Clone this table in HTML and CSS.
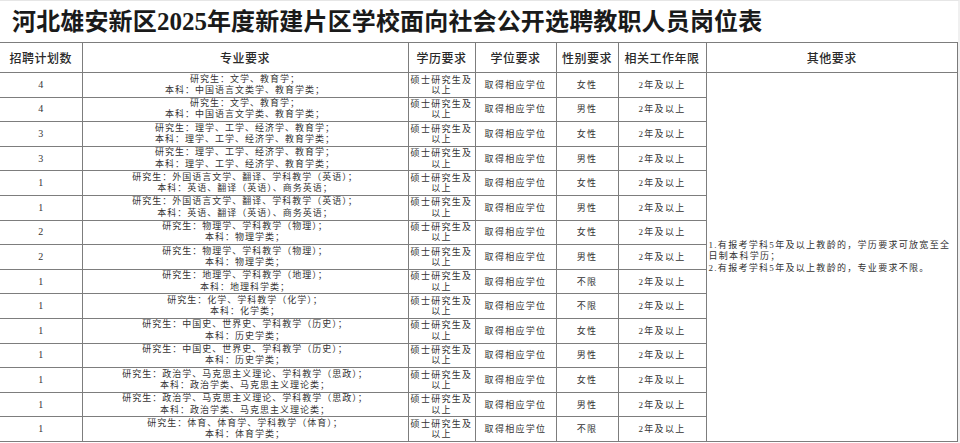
FILE: index.html
```html
<!DOCTYPE html>
<html lang="zh-CN">
<head>
<meta charset="utf-8">
<title>岗位表</title>
<link rel="stylesheet" href="styles.css">
</head>
<body>
<div class="page">
  <h1 class="title">河北雄安新区<span class="num">2025</span>年度新建片区学校面向社会公开选聘教职人员岗位表</h1>
  <table class="t">
    <colgroup>
      <col class="c1"><col class="c2"><col class="c3"><col class="c4"><col class="c5"><col class="c6"><col class="c7">
    </colgroup>
    <thead>
      <tr>
        <th>招聘计划数</th><th>专业要求</th><th>学历要求</th><th>学位要求</th><th>性别要求</th><th>相关工作年限</th><th>其他要求</th>
      </tr>
    </thead>
    <tbody>
      <tr>
        <td class="n">4</td>
        <td class="major">研究生：文学、教育学；<br>本科：中国语言文类学、教育学类；</td>
        <td class="edu">硕士研究生及以上</td><td class="s">取得相应学位</td><td class="s">女性</td><td class="s">2年及以上</td>
        <td class="other" rowspan="15"><span class="ol">1.有报考学科5年及以上教龄的，学历要求可放宽至全</span><br><span class="ol">日制本科学历；</span><br><span class="ol">2.有报考学科5年及以上教龄的，专业要求不限。</span></td>
      </tr>
      <tr>
        <td class="n">4</td>
        <td class="major">研究生：文学、教育学；<br>本科：中国语言文学类、教育学类；</td>
        <td class="edu">硕士研究生及以上</td><td class="s">取得相应学位</td><td class="s">男性</td><td class="s">2年及以上</td>
      </tr>
      <tr>
        <td class="n">3</td>
        <td class="major">研究生：理学、工学、经济学、教育学；<br>本科：理学、工学、经济学、教育学类；</td>
        <td class="edu">硕士研究生及以上</td><td class="s">取得相应学位</td><td class="s">女性</td><td class="s">2年及以上</td>
      </tr>
      <tr>
        <td class="n">3</td>
        <td class="major">研究生：理学、工学、经济学、教育学；<br>本科：理学、工学、经济学、教育学类；</td>
        <td class="edu">硕士研究生及以上</td><td class="s">取得相应学位</td><td class="s">男性</td><td class="s">2年及以上</td>
      </tr>
      <tr>
        <td class="n">1</td>
        <td class="major">研究生：外国语言文学、翻译、学科教学（英语）；<br>本科：英语、翻译（英语）、商务英语；</td>
        <td class="edu">硕士研究生及以上</td><td class="s">取得相应学位</td><td class="s">女性</td><td class="s">2年及以上</td>
      </tr>
      <tr>
        <td class="n">1</td>
        <td class="major">研究生：外国语言文学、翻译、学科教学（英语）；<br>本科：英语、翻译（英语）、商务英语；</td>
        <td class="edu">硕士研究生及以上</td><td class="s">取得相应学位</td><td class="s">男性</td><td class="s">2年及以上</td>
      </tr>
      <tr>
        <td class="n">2</td>
        <td class="major">研究生：物理学、学科教学（物理）；<br>本科：物理学类；</td>
        <td class="edu">硕士研究生及以上</td><td class="s">取得相应学位</td><td class="s">女性</td><td class="s">2年及以上</td>
      </tr>
      <tr>
        <td class="n">2</td>
        <td class="major">研究生：物理学、学科教学（物理）；<br>本科：物理学类；</td>
        <td class="edu">硕士研究生及以上</td><td class="s">取得相应学位</td><td class="s">男性</td><td class="s">2年及以上</td>
      </tr>
      <tr>
        <td class="n">1</td>
        <td class="major">研究生：地理学、学科教学（地理）；<br>本科：地理科学类；</td>
        <td class="edu">硕士研究生及以上</td><td class="s">取得相应学位</td><td class="s">不限</td><td class="s">2年及以上</td>
      </tr>
      <tr>
        <td class="n">1</td>
        <td class="major">研究生：化学、学科教学（化学）；<br>本科：化学类；</td>
        <td class="edu">硕士研究生及以上</td><td class="s">取得相应学位</td><td class="s">不限</td><td class="s">2年及以上</td>
      </tr>
      <tr>
        <td class="n">1</td>
        <td class="major">研究生：中国史、世界史、学科教学（历史）；<br>本科：历史学类；</td>
        <td class="edu">硕士研究生及以上</td><td class="s">取得相应学位</td><td class="s">女性</td><td class="s">2年及以上</td>
      </tr>
      <tr>
        <td class="n">1</td>
        <td class="major">研究生：中国史、世界史、学科教学（历史）；<br>本科：历史学类；</td>
        <td class="edu">硕士研究生及以上</td><td class="s">取得相应学位</td><td class="s">男性</td><td class="s">2年及以上</td>
      </tr>
      <tr>
        <td class="n">1</td>
        <td class="major">研究生：政治学、马克思主义理论、学科教学（思政）；<br>本科：政治学类、马克思主义理论类；</td>
        <td class="edu">硕士研究生及以上</td><td class="s">取得相应学位</td><td class="s">女性</td><td class="s">2年及以上</td>
      </tr>
      <tr>
        <td class="n">1</td>
        <td class="major">研究生：政治学、马克思主义理论、学科教学（思政）；<br>本科：政治学类、马克思主义理论类；</td>
        <td class="edu">硕士研究生及以上</td><td class="s">取得相应学位</td><td class="s">男性</td><td class="s">2年及以上</td>
      </tr>
      <tr>
        <td class="n">1</td>
        <td class="major">研究生：体育、体育学、学科教学（体育）；<br>本科：体育学类；</td>
        <td class="edu">硕士研究生及以上</td><td class="s">取得相应学位</td><td class="s">不限</td><td class="s">2年及以上</td>
      </tr>
    </tbody>
  </table>
</div>
</body>
</html>
```
FILE: styles.css
```css
html, body {
  margin: 0;
  padding: 0;
  background: #ffffff;
}

.page {
  width: 960px;
  box-sizing: border-box;
  border-top: 1px solid #e6e6e6;
  border-right: 2px solid #f0f0f0;
  overflow: hidden;
  height: 443px;
}

.title {
  margin: 0;
  height: 41px;
  line-height: 41px;
  padding-left: 12px;
  font-family: "Liberation Serif", "Noto Sans CJK SC", serif;
  font-weight: 700;
  font-size: 24px;
  letter-spacing: 0.15px;
  color: #1a1a1a;
  white-space: nowrap;
}

.title .num {
  font-size: 25px;
  letter-spacing: 0;
}

.t {
  width: 958px;
  border-collapse: collapse;
  table-layout: fixed;
  border-top: 1px solid #707070;
  border-right: 2px solid #7a7a7a;
}

.c1 { width: 82px; }
.c2 { width: 326px; }
.c3 { width: 67px; }
.c4 { width: 81px; }
.c5 { width: 62px; }
.c6 { width: 88px; }
.c7 { width: 252px; }

.t th,
.t td {
  border: 1px solid #7d7d7d;
  padding: 0 2px;
  text-align: center;
  vertical-align: middle;
  overflow: hidden;
}

.t th:first-child,
.t td:first-child {
  border-left: 0;
}

.t thead tr {
  height: 30px;
}

.t th {
  font-family: "Noto Sans CJK SC", sans-serif;
  font-weight: 500;
  font-size: 12px;
  letter-spacing: 0.5px;
  color: #2a2a2a;
  white-space: nowrap;
}

.t tbody tr {
  height: 24.6px;
}

.t td {
  font-family: "Liberation Serif", "Noto Sans CJK SC", serif;
  font-size: 9px;
  line-height: 10px;
  color: #333333;
}

.t td.n {
  font-size: 10px;
}

.t td.major {
  line-height: 11.3px;
  letter-spacing: 1px;
  white-space: nowrap;
}

.t td.edu {
  line-height: 10.3px;
  letter-spacing: 1.3px;
  padding: 0 1px;
}

.t td.s {
  letter-spacing: 1.3px;
  white-space: nowrap;
}

.t td.other {
  text-align: left;
  line-height: 11.5px;
  letter-spacing: 1.3px;
  padding: 0 2px;
  vertical-align: middle;
}

.ol {
  white-space: nowrap;
}
```
